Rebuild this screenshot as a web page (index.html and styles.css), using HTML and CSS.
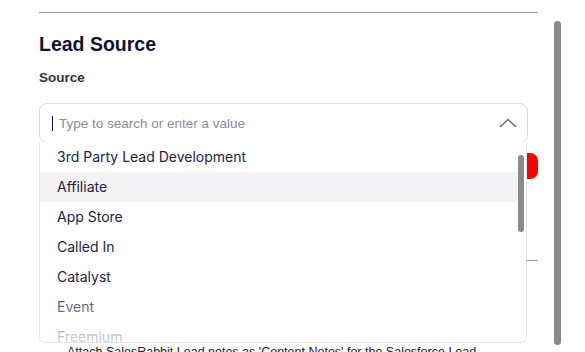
FILE: index.html
```html
<!DOCTYPE html>
<html lang="en">
<head>
    <meta charset="UTF-8">
    <meta name="viewport" content="width=device-width, initial-scale=1.0">
    <title>Lead Source</title>
    <link rel="stylesheet" href="styles.css">
</head>
<body>
    <div class="panel">
        <div class="divider"></div>

        <h2 class="section-title">Lead Source</h2>

        <div class="field">
            <label class="field-label">Source</label>
            <div class="combobox">
                <div class="combo-input">
                    <span class="caret"></span>
                    <span class="placeholder">Type to search or enter a value</span>
                    <svg class="chevron" width="18" height="10" viewBox="0 0 18 10">
                        <polyline points="1,9 9,1.5 17,9" fill="none" stroke="#6b6b80" stroke-width="1.5"/>
                    </svg>
                </div>
                <div class="dropdown">
                    <ul class="options">
                        <li class="option">3rd Party Lead Development</li>
                        <li class="option active">Affiliate</li>
                        <li class="option">App Store</li>
                        <li class="option">Called In</li>
                        <li class="option">Catalyst</li>
                        <li class="option">Event</li>
                        <li class="option">Freemium</li>
                    </ul>
                    <div class="list-thumb"></div>
                </div>
            </div>
        </div>

        <!-- page content under the open dropdown -->
        <div class="action-row">
            <button class="danger-btn">Remove</button>
        </div>

        <div class="divider lower"></div>

        <div class="check-row">
            Attach SalesRabbit Lead notes as 'Content Notes' for the Salesforce Lead
        </div>
    </div>

    <div class="page-thumb"></div>
</body>
</html>
```

FILE: styles.css
```css
:root {
    --navy: #0f1133;
    --text: #23233f;
    --muted: #8c8c9a;
    --line: #9e9e9e;
    --border: #dcdce0;
    --thumb: #8a8a8a;
    --hover: #f3f3f6;
}

* {
    margin: 0;
    padding: 0;
    box-sizing: border-box;
}

body {
    font-family: 'Liberation Sans', Arial, sans-serif;
    background: #ffffff;
    color: #222;
    height: 352px;
    overflow: hidden;
}

.panel {
    padding: 12px 47px 0 39px;
}

.divider {
    border-top: 1px solid var(--line);
}

.section-title {
    margin-top: 19px;
    font-size: 19.5px;
    line-height: 24px;
    font-weight: 700;
    color: var(--navy);
}

.field {
    margin-top: 14px;
    width: 489px;
}

.field-label {
    display: block;
    font-size: 13.5px;
    line-height: 16px;
    font-weight: 700;
    color: #333;
}

.combobox {
    position: relative;
    margin-top: 17px;
}

.combo-input {
    height: 40px;
    border: 1px solid var(--border);
    border-radius: 8px;
    display: flex;
    align-items: center;
    padding: 0 10px 0 12px;
}

.caret {
    width: 1px;
    height: 15px;
    background: var(--navy);
}

.placeholder {
    margin-left: 6px;
    font-size: 13.5px;
    color: var(--muted);
    flex: 1;
}

.chevron {
    margin-bottom: 1px;
}

.dropdown {
    position: absolute;
    top: 39px;
    left: 0;
    width: 488px;
    height: 201px;
    background: #fff;
    border: 1px solid #e4e4e8;
    border-top: none;
    border-radius: 0 0 6px 6px;
    overflow: hidden;
    z-index: 10;
}

.dropdown::after {
    content: "";
    position: absolute;
    left: 0;
    right: 0;
    bottom: 0;
    height: 56px;
    background: linear-gradient(rgba(255, 255, 255, 0), rgba(255, 255, 255, 0.8));
}

.options {
    list-style: none;
    margin-right: 9px;
}

.option {
    height: 30px;
    line-height: 30px;
    padding-left: 17px;
    font-family: 'Inter', sans-serif;
    font-size: 14px;
    color: var(--text);
}

.option.active {
    background: var(--hover);
}

.list-thumb {
    position: absolute;
    top: 13px;
    right: 2px;
    width: 6px;
    height: 77px;
    border-radius: 3px;
    background: var(--thumb);
}

.action-row {
    display: flex;
    justify-content: flex-end;
    margin-top: 10px;
}

.danger-btn {
    height: 26px;
    padding: 0 14px;
    border: none;
    border-radius: 8px;
    background: #ff0000;
    color: #fff;
    font-family: inherit;
    font-size: 13px;
}

.divider.lower {
    margin-top: 81px;
}

.check-row {
    margin-top: 83px;
    padding-left: 28px;
    font-size: 12.5px;
    line-height: 16px;
    color: #222;
}

.page-thumb {
    position: fixed;
    top: 21px;
    right: 24px;
    width: 7px;
    height: 324px;
    border-radius: 4px;
    background: var(--thumb);
}
```
